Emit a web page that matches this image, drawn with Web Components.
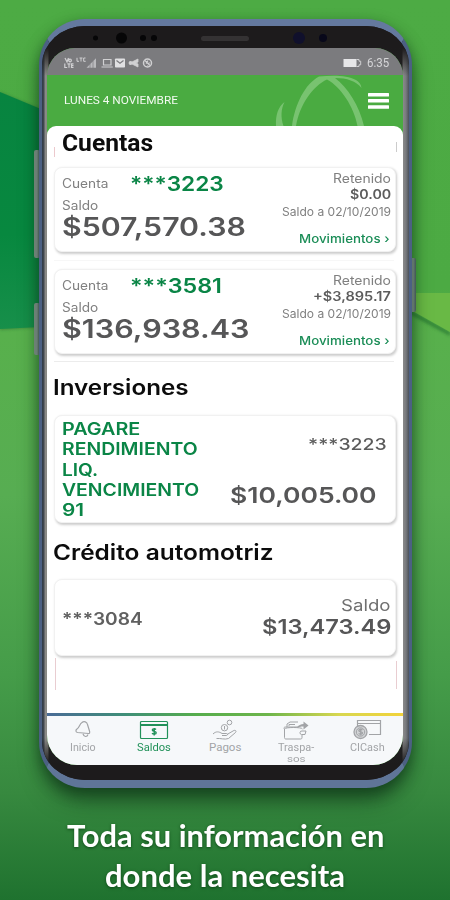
<!DOCTYPE html>
<html lang="es">
<head>
<meta charset="utf-8">
<title>Saldos</title>
<style>
    body {
        margin: 0;
        width: 450px;
        height: 900px;
        overflow: hidden;
        font-family: Inter, "Liberation Sans", sans-serif;
    }
</style>
</head>
<body>
<promo-poster></promo-poster>

<script>
// text stretched to an exact width (w attribute)
class FitText extends HTMLElement {
    constructor() {
        super();
        this.attachShadow({ mode: 'open' });
        this.shadowRoot.innerHTML = `
            <style>
                :host { display: block; white-space: nowrap; }
                span { display: inline-block; transform-origin: 0 50%; vertical-align: top; }
            </style>
            <span><slot></slot></span>
        `;
    }
    connectedCallback() {
        const w = parseFloat(this.getAttribute('w'));
        const span = this.shadowRoot.querySelector('span');
        span.style.transform = `scaleX(${w / span.offsetWidth})`;
        this.style.width = w + 'px';
    }
}

class PosterBackdrop extends HTMLElement {
    constructor() {
        super();
        this.attachShadow({ mode: 'open' });
        this.shadowRoot.innerHTML = `
            <style>
                :host { display: block; width: 450px; height: 900px; }
                svg { display: block; }
            </style>
            <svg width="450" height="900" viewBox="0 0 450 900">
                <defs>
                    <linearGradient id="base" x1="0" y1="0" x2="0" y2="1">
                        <stop offset="0" stop-color="#4dab44"/>
                        <stop offset=".32" stop-color="#4caa43"/>
                        <stop offset=".37" stop-color="#58b04c"/>
                        <stop offset=".55" stop-color="#57ad52"/>
                        <stop offset=".75" stop-color="#459c49"/>
                        <stop offset=".88" stop-color="#37893f"/>
                        <stop offset="1" stop-color="#1f722f"/>
                    </linearGradient>
                    <linearGradient id="side" x1="0" y1="0" x2="0" y2="1">
                        <stop offset="0" stop-color="#078440"/>
                        <stop offset=".6" stop-color="#07883f"/>
                        <stop offset="1" stop-color="#178f4a"/>
                    </linearGradient>
                    <filter id="soft"><feGaussianBlur stdDeviation="1.500"/></filter>
                </defs>
                <rect width="450" height="900" fill="url(#base)"/>
                <path d="M0 92L60 117V326L0 330Z" fill="#1b5a2a" opacity=".4" filter="url(#soft)"/>
                <path d="M0 92L60 117V326L0 329Z" fill="url(#side)"/>
                <path d="M400 304L450 332V336L400 309Z" fill="#1f6a2c" opacity=".6" filter="url(#soft)"/>
                <path d="M400 293H450V332L400 304Z" fill="#69b945"/>
            </svg>
        `;
    }
}

class StatusBar extends HTMLElement {
    constructor() {
        super();
        this.attachShadow({ mode: 'open' });
        this.shadowRoot.innerHTML = `
            <style>
                :host {
                    display: flex;
                    justify-content: space-between;
                    align-items: center;
                    height: 27px;
                    padding: 2px 14px 0 17px;
                    box-sizing: border-box;
                    background: #7b7b7e;
                    color: #d6d6d8;
                    font-family: Roboto, sans-serif;
                }
                div { display: flex; align-items: center; }
                .right { gap: 5px; }
                .time { font-size: 12px; line-height: 14px; }
            </style>
            <div>
                <svg width="90" height="12" viewBox="0 0 90 12" fill="none" stroke="#d0d0d2" stroke-width="1.2">
                    <path d="M1 1l2 4 1.500-4M6 2.200a1.300 1.300 0 1 0 .1 0M.8 6.500v4h2.400M3.400 6.800h3M5 6.800v4M9.500 6.800H7.500v3.700h2M7.500 8.600h2"/>
                    <path d="M13 .8v3.500h2M15.500 1h3M17 1v3.500M21.500 1H19.700v3.300h2" stroke-width="1"/>
                    <path d="M22.500 10.800L32 1.200v9.600z" fill="#bababd" stroke="none"/>
                    <path d="M26 7v4M29 4v7" stroke="#7b7b7e" stroke-width=".7"/>
                    <path d="M39.500 2.500h7.500v5.500h-7.500zM37.500 10h11.300"/>
                    <rect x="51" y="1.500" width="10" height="9" rx=".8" fill="#e0e0e2" stroke="none"/>
                    <path d="M52.500 3.500L56 6.300l3.500-2.800" stroke="#7b7b7e"/>
                    <path d="M66 6l8-4v3l-2 1 2 1v3z" fill="#d0d0d2" stroke-width=".8"/>
                    <circle cx="66.500" cy="6" r="1.300" fill="#d0d0d2"/>
                    <circle cx="83.500" cy="6" r="4" stroke-width="1.500"/>
                    <path d="M81 3.500l5 5M82 6.500l2-3M83.500 8.500l2-3"/>
                </svg>
            </div>
            <div class="right">
                <svg width="19" height="10" viewBox="0 0 19 10">
                    <rect x=".5" y="1" width="13" height="8" fill="#e6e6e8"/>
                    <path d="M13.500 1.500h2.500v1.700h1.700v3.600H16v1.700h-2.500" fill="none" stroke="#d0d0d2"/>
                </svg>
                <fit-text class="time" w="22">6:35</fit-text>
            </div>
        `;
    }
}

class AppHeader extends HTMLElement {
    constructor() {
        super();
        this.attachShadow({ mode: 'open' });
        this.shadowRoot.innerHTML = `
            <style>
                :host {
                    display: flex;
                    align-items: center;
                    height: 51px;
                    padding: 0 14px 0 17px;
                    box-sizing: border-box;
                    background: #4aab41;
                    color: #f2faf0;
                    font-family: Roboto, sans-serif;
                }
                .date { font-size: 11.500px; line-height: 16px; margin-top: -1px; }
                .swirl { margin-left: 97px; }
                .menu { margin-left: auto; }
                svg { display: block; flex: none; }
            </style>
            <fit-text class="date" w="114"><slot></slot></fit-text>
            <svg class="swirl" width="93" height="51" viewBox="0 0 93 51" fill="#78c370">
                <path d="M1 51C.5 40 3 32 9.500 27C6 34 5.500 42 8.500 51Z"/>
                <path d="M17 51C20 29 30 9 44 1.500C58 0 72 0 81 5C84 7 86 9 86.500 13C81 6 72 3 60 3C73 13 84 30 89 51H82.500C79 32 66 12 52 4.500C38 11 25 29 21 51Z"/>
            </svg>
            <svg class="menu" width="21" height="16" viewBox="0 0 21 16" fill="#fff">
                <rect y="0" width="21" height="3.500" rx=".5"/>
                <rect y="6.100" width="21" height="3.500" rx=".5"/>
                <rect y="12.200" width="21" height="3.500" rx=".5"/>
            </svg>
        `;
    }
}

class BalanceCard extends HTMLElement {
    constructor() {
        super();
        this.attachShadow({ mode: 'open' });
        this.shadowRoot.innerHTML = `
            <style>
                :host {
                    display: flex;
                    justify-content: space-between;
                    box-sizing: border-box;
                    width: 342.500px;
                    padding: 0 4px 0 7.500px;
                    border: 1px solid #f1f1f1;
                    border-radius: 8px;
                    background: #fff;
                    box-shadow: 1px 1.500px 2.500px rgba(0, 0, 0, .2);
                }
            </style>
            <slot></slot>
        `;
    }
}

class AccountCard extends HTMLElement {
    constructor() {
        super();
        this.attachShadow({ mode: 'open' });
        const at = name => this.getAttribute(name);
        this.shadowRoot.innerHTML = `
            <style>
                :host { display: block; }
                balance-card { height: 85px; }
                .left { padding-top: 4px; }
                .head { display: flex; align-items: center; gap: 21.500px; height: 24px; }
                .label { font-size: 12.500px; line-height: 16px; color: #808080; }
                .number { font-size: 20px; font-weight: 600; color: #0a8546; }
                .saldo { margin-top: 1.500px; }
                .amount { font-size: 25px; line-height: 27px; font-weight: 600; color: #565657; }
                .right {
                    display: flex;
                    flex-direction: column;
                    align-items: flex-end;
                    padding-top: 3px;
                }
                .held { font-size: 12.500px; line-height: 16.500px; font-weight: 600; color: #5c5c5c; }
                .date { font-size: 11.500px; line-height: 17px; color: #808080; }
                .more { font-size: 12px; line-height: 16px; font-weight: 500; color: #1b8d57; margin: 10px 1px 0 0; }
            </style>
            <balance-card>
                <div class="left">
                    <div class="head">
                        <fit-text class="label" w="46">Cuenta</fit-text>
                        <fit-text class="number" w="${at('number-w')}">${at('number')}</fit-text>
                    </div>
                    <fit-text class="label saldo" w="36">Saldo</fit-text>
                    <fit-text class="amount" w="${at('amount-w')}">${at('amount')}</fit-text>
                </div>
                <div class="right">
                    <fit-text class="label" w="58">Retenido</fit-text>
                    <fit-text class="held" w="${at('held-w')}">${at('held')}</fit-text>
                    <fit-text class="date" w="109">Saldo a 02/10/2019</fit-text>
                    <fit-text class="more" w="91">Movimientos ›</fit-text>
                </div>
            </balance-card>
        `;
    }
}

class TabItem extends HTMLElement {
    constructor() {
        super();
        this.attachShadow({ mode: 'open' });
        this.shadowRoot.innerHTML = `
            <style>
                :host {
                    display: flex;
                    flex-direction: column;
                    align-items: center;
                    width: 71.200px;
                    color: #a2a4a7;
                    font: 11.500px/13.500px Roboto, sans-serif;
                }
                :host([active]) { color: #219159; }
            </style>
            <slot name="icon"></slot>
            <slot></slot>
        `;
    }
}

class TabBar extends HTMLElement {
    constructor() {
        super();
        this.attachShadow({ mode: 'open' });
        this.shadowRoot.innerHTML = `
            <style>
                :host { display: block; height: 52px; background: #f6f8fa; }
                .line { height: 2.500px; background: linear-gradient(90deg, #4a6b96, #3f8f78 22%, #56ad4c 42%, #6db54b 62%, #d8d750 82%, #f2d33a); }
                nav { display: flex; padding-top: 3px; }
                svg {
                    display: block;
                    height: 22px;
                    fill: none;
                    stroke: currentColor;
                    stroke-width: 1;
                }
                .sos { font-size: 9px; line-height: 11px; }
            </style>
            <div class="line"></div>
            <nav>
                <tab-item>
                    <svg slot="icon" width="20" height="22" viewBox="0 0 20 22">
                        <path d="M9 3.500c2-1.800 5-.5 5.500 2l2 6.500c.5 1.700 0 2.500-1 2.500L4.500 13.500c-2-.5-2-2.500-.5-3.500 2.500-1.500 2.500-5 5-6.500zM10 15c1 3 4 3.500 5 .5" stroke-width="1.200"/>
                    </svg>
                    <fit-text w="26">Inicio</fit-text>
                </tab-item>
                <tab-item active>
                    <svg slot="icon" width="30" height="22" viewBox="0 0 30 22">
                        <rect x="1.500" y="2.500" width="27" height="17" rx="1" stroke-width="1.200"/>
                        <path d="M2 6h26" stroke-width="2"/>
                        <path d="M17 10.500c-1-1-3.700-1-3.700.6s3.900 1 3.900 2.700-3 1.700-4.200.5M15.200 9v7.500" stroke-width="1.400"/>
                    </svg>
                    <fit-text w="34">Saldos</fit-text>
                </tab-item>
                <tab-item>
                    <svg slot="icon" width="28" height="22" viewBox="0 0 28 22">
                        <circle cx="18.500" cy="3.500" r="2.300"/>
                        <circle cx="13.500" cy="8.700" r="3.200"/>
                        <path d="M13.500 7v3.500M2 15c3-3 6-2.500 9-.5h4c2 0 2 2 0 2h-4M16 15.500l6-3.500c2-1.500 4-.2 2.500 1.500l-7 6c-4 1.500-8-.5-12 0"/>
                    </svg>
                    <fit-text w="32">Pagos</fit-text>
                </tab-item>
                <tab-item>
                    <svg slot="icon" width="30" height="22" viewBox="0 0 30 22">
                        <path d="M6 8V5l3-2h8M8 7V5.500h6M3.500 10c0-2 18-2 18 0M3.500 10c-1-1-.5-2 1-2h13M3.500 10v8.500c0 1 .5 1.500 1.500 1.500h14.500c1 0 1.500-.5 1.500-1.500V16M21 12h4l-1 3.500h-3.500a1.500 1.500 0 0 1 .5-3.500z"/>
                        <path d="M15.500 9c2-3 4.500-4 7-4V2.500l5 4-5 4V7.500c-3 0-4.500.5-7 1.500z" fill="currentColor" stroke="none"/>
                    </svg>
                    <fit-text w="36">Traspa-</fit-text>
                    <fit-text class="sos" w="18">sos</fit-text>
                </tab-item>
                <tab-item>
                    <svg slot="icon" width="30" height="22" viewBox="0 0 30 22">
                        <path d="M5.500 7V1.500h23v14H17M5.500 4.500h23" stroke-width="1.200"/>
                        <circle cx="8.500" cy="13" r="6.500" fill="#d3d5d7" stroke-width="1.300"/>
                        <circle cx="8.500" cy="13" r="4.200"/>
                        <path d="M10.500 11c-1-1-3.700-1-3.700.6s3.800 1 3.800 2.400-2.800 1.500-4 .5M8.700 9.500v7" stroke-width="1.300"/>
                    </svg>
                    <fit-text w="35">CICash</fit-text>
                </tab-item>
            </nav>
        `;
    }
}

class BalanceList extends HTMLElement {
    constructor() {
        super();
        this.attachShadow({ mode: 'open' });
        this.shadowRoot.innerHTML = `
            <style>
                :host {
                    display: block;
                    height: 587px;
                    box-sizing: border-box;
                    padding: 0 6px 0 6.700px;
                    background: #fff;
                    border-radius: 9px 9px 0 0;
                }
                .top { display: flex; justify-content: space-between; height: 41px; }
                .top .main { font: 700 23px/35px Roboto, sans-serif; color: #0c0c0c; margin-right: auto; padding-left: 7px; }
                .tick { width: 1px; height: 10px; margin-top: 21px; background: #ecc9cd; }
                .tick.grey { margin-top: 16px; background: #ccc; }
                .title { font-size: 21px; line-height: 26px; font-weight: 600; color: #0c0c0c; }
                hr { width: 340px; border: 0; height: 1px; margin: 0; background: #ececec; }
                .gap { height: 17px; display: flex; flex-direction: column; justify-content: center; }
                .gap hr { background: #f7f7f7; }
                .name { font-size: 17px; line-height: 20.300px; font-weight: 600; color: #0a8546; padding-top: 3px; }
                .invest { height: 108px; }
                .invest .data { display: flex; flex-direction: column; align-items: flex-end; }
                .invest .number { font-size: 16.500px; line-height: 20px; font-weight: 500; color: #5c5c5c; margin: 18px 4px 0 0; }
                .invest .amount { font-size: 22px; line-height: 26px; font-weight: 600; color: #565657; margin: 27.500px 14.500px 0 0; }
                .credit { height: 77px; }
                .credit .number { font-size: 17px; line-height: 24px; font-weight: 600; color: #606060; margin-top: 26.500px; }
                .credit .data { display: flex; flex-direction: column; align-items: flex-end; padding-top: 15px; }
                .credit .label { font-size: 16px; line-height: 20px; color: #707070; }
                .credit .amount { font-size: 20px; line-height: 24px; font-weight: 600; color: #565657; }
                .rest { display: flex; justify-content: space-between; padding: 2px 0 0 1.500px; }
                .rest i { width: 1px; height: 32px; background: #e9cdd1; }
                .rest i + i { height: 28px; margin-top: 3px; }
            </style>
            <div class="top">
                <div class="tick"></div>
                <fit-text class="main" w="91">Cuentas</fit-text>
                <div class="tick grey"></div>
            </div>
            <account-card number="***3223" number-w="94" amount="$507,570.38" amount-w="184" held="$0.00" held-w="41"></account-card>
            <div class="gap"><hr></div>
            <account-card number="***3581" number-w="92" amount="$136,938.43" amount-w="188" held="+$3,895.17" held-w="78"></account-card>
            <hr style="margin-top: 6.500px">
            <fit-text class="title" w="136" style="margin: 13px 0 14.500px -.7px">Inversiones</fit-text>
            <balance-card class="invest">
                <div class="name">
                    <fit-text w="78">PAGARE</fit-text>
                    <fit-text w="136">RENDIMIENTO</fit-text>
                    <fit-text w="36">LIQ.</fit-text>
                    <fit-text w="137">VENCIMIENTO</fit-text>
                    <fit-text w="22">91</fit-text>
                </div>
                <div class="data">
                    <fit-text class="number" w="79">***3223</fit-text>
                    <fit-text class="amount" w="147">$10,005.00</fit-text>
                </div>
            </balance-card>
            <fit-text class="title" w="221" style="margin: 16.500px 0 13.500px -.7px">Crédito automotriz</fit-text>
            <balance-card class="credit">
                <fit-text class="number" w="81">***3084</fit-text>
                <div class="data">
                    <fit-text class="label" w="50">Saldo</fit-text>
                    <fit-text class="amount" w="129">$13,473.49</fit-text>
                </div>
            </balance-card>
            <div class="rest"><i></i><i></i></div>
        `;
    }
}

class PhoneFrame extends HTMLElement {
    constructor() {
        super();
        this.attachShadow({ mode: 'open' });
        this.shadowRoot.innerHTML = `
            <style>
                :host {
                    display: flex;
                    position: relative;
                    width: 382px;
                    justify-content: center;
                }
                .key { position: absolute; width: 6px; border-radius: 2px; background: linear-gradient(90deg, #8a9a92, #9aa6a4 50%, #55666a); }
                .shell {
                    position: relative;
                    box-sizing: border-box;
                    width: 373px;
                    height: 769px;
                    border: solid;
                    border-width: 7px 3px 8px;
                    border-color: #64799e #4c6083 #5f7598;
                    border-radius: 46px;
                    background: #1d1b1c;
                    box-shadow: 0 5px 14px rgba(10, 50, 20, .5), 0 16px 22px -4px rgba(10, 35, 18, .55);
                }
                .glass {
                    height: 754px;
                    box-sizing: border-box;
                    padding: 0 5.500px;
                    border-radius: 43px / 39px;
                    overflow: hidden;
                    background:
                        linear-gradient(#1d1b1c 22px, transparent 50px, transparent 712px, #1d1b1c 738px),
                        linear-gradient(90deg, #2f3a46, #3f464e 1.500px, #8a8a88 3.500px, #85867f 6px, #222 7px, #222 360px, #8a8a8a 361px, #77797d 364px, #4a5058);
                }
                .sensors { display: flex; height: 22px; align-items: center; }
                .sensors svg { display: block; }
                .screen { height: 717px; border-radius: 28px 28px 30px 30px; overflow: hidden; background: #4aab41; }
            </style>
            <div class="key" style="left: 0; top: 131px; height: 108px"></div>
            <div class="key" style="left: 0; top: 284px; height: 52px"></div>
            <div class="key" style="right: 0; top: 239px; height: 54px"></div>
            <div class="shell">
                <div class="glass">
                    <div class="sensors">
                        <svg width="356" height="22" viewBox="0 0 356 22" fill="#060607">
                            <circle cx="48.500" cy="12" r="2.500"/>
                            <circle cx="74.500" cy="12" r="5.500"/>
                            <circle cx="96" cy="12" r="3"/>
                            <circle cx="107" cy="12" r="3"/>
                            <rect x="154" y="10" width="48" height="5" rx="2.500" fill="#343233"/>
                            <circle cx="252" cy="12" r="6" fill="#10102c"/>
                            <circle cx="276" cy="12" r="4" fill="#08081a"/>
                        </svg>
                    </div>
                    <div class="screen"><slot></slot></div>
                </div>
            </div>
        `;
    }
}

class PromoPoster extends HTMLElement {
    constructor() {
        super();
        this.attachShadow({ mode: 'open' });
        this.shadowRoot.innerHTML = `
            <style>
                :host { display: grid; width: 450px; height: 900px; overflow: hidden; }
                poster-backdrop, main { grid-area: 1 / 1; }
                main { display: flex; flex-direction: column; align-items: center; padding-top: 19px; z-index: 1; }
                .caption {
                    display: flex;
                    flex-direction: column;
                    align-items: center;
                    margin-top: 28px;
                    color: #fff;
                    font: 700 29.500px/39.500px Lato, sans-serif;
                    text-shadow: 0 1px 3px rgba(0, 50, 10, .7);
                }
            </style>
            <poster-backdrop></poster-backdrop>
            <main>
                <phone-frame>
                    <status-bar></status-bar>
                    <app-header>LUNES 4 NOVIEMBRE</app-header>
                    <balance-list></balance-list>
                    <tab-bar></tab-bar>
                </phone-frame>
                <div class="caption">
                    <fit-text w="317">Toda su información en</fit-text>
                    <fit-text w="240">donde la necesita</fit-text>
                </div>
            </main>
        `;
    }
}

customElements.define('fit-text', FitText);
customElements.define('poster-backdrop', PosterBackdrop);
customElements.define('status-bar', StatusBar);
customElements.define('app-header', AppHeader);
customElements.define('balance-card', BalanceCard);
customElements.define('account-card', AccountCard);
customElements.define('tab-item', TabItem);
customElements.define('tab-bar', TabBar);
customElements.define('balance-list', BalanceList);
customElements.define('phone-frame', PhoneFrame);
customElements.define('promo-poster', PromoPoster);
</script>
</body>
</html>
